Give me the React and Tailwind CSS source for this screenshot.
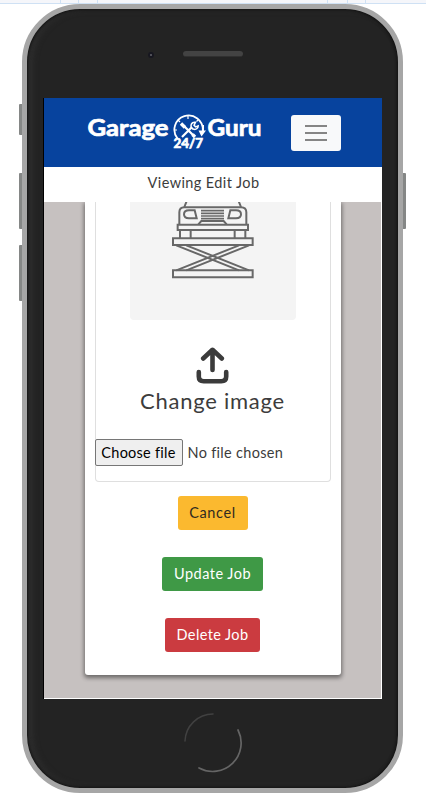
import React from "react";

function Logo() {
  return (
    <svg className="h-10 w-[178px]" viewBox="86 112 178 40" fill="none" stroke="#fff" role="img">
      <g fill="#fff" stroke="#fff" strokeWidth=".7" fontFamily="Lato, sans-serif" fontWeight="700">
        <text x="87.500" y="134.800" fontSize="22" textLength="81" lengthAdjust="spacingAndGlyphs">Garage</text>
        <text x="207.500" y="134.800" fontSize="22" textLength="54" lengthAdjust="spacingAndGlyphs">Guru</text>
        <text x="173.500" y="147.400" fontSize="13" textLength="29.500" lengthAdjust="spacingAndGlyphs">24/7</text>
      </g>
      <path d="M177.500 137.500a14.200 14.200 0 1 1 25.300-8" strokeWidth="1.800" />
      <path d="M203 124v7" strokeWidth="2" />
      <path d="M198.500 129.500h7.500l-4.500 6z" fill="#fff" stroke="none" />
      <path d="M174 129h3M188 115v3M178 119l2 2M198 119l-1.500 1.500" strokeWidth="1.200" />
      <path d="M182 136l10-10M184 125l9 9" strokeWidth="2.200" />
      <path d="M181 122.500l4 4M192.500 133.500l2.500 2.500" strokeWidth="3.400" />
      <path d="M195.500 121.300a3.600 3.600 0 1 0 2.700 3.600l-2.500 1-1.700-1.500z" strokeWidth="1.500" />
    </svg>
  );
}

function CarLift() {
  return (
    <svg className="block h-[118px] w-[166px]" viewBox="30 21 498 354" fill="none" stroke="#686868" strokeWidth="6">
      <path d="M201 16l-8 20M355 16l8 20" />
      <path d="M178 88V52q0-15 15-15H363q16 0 16 15V88" />
      <path d="M224 46H207q-15 0-15 12t15 12h23zM331 46h17q15 0 15 12t-15 12h-23z" />
      <path d="M243 47h69M243 55h69M243 63h69M243 71h69" strokeWidth="5" />
      <path d="M235 88l9-10h67l9 10" />
      <path d="M173 89h211v16H173zM180 106v23M212 106v23M344 106v23M376 106v23" />
      <path d="M159 130h239v20H159zM159 226h239v21H159z" />
      <path d="M169 151l188 75M199 151l188 75" />
      <path d="M387 151l-188 75M357 151l-188 75" />
    </svg>
  );
}

function UploadIcon() {
  return (
    <svg className="block h-[37px] w-[33px]" viewBox="0 0 33 37" fill="none" stroke="#3b3b3b" strokeWidth="4.600" strokeLinecap="round" strokeLinejoin="round">
      <path d="M16.500 23V3M7.200 11.500l9.300-8.700 9.300 8.700M2.800 25v4.500q0 4.700 4.900 4.700h17.600q4.900 0 4.900-4.700V25" />
    </svg>
  );
}

function Header() {
  return (
    <header className="flex h-[69px] shrink-0 items-center bg-[#07439e] pl-[42px]">
      <Logo />
      <button className="ml-[27px] flex h-[36px] w-[50px] flex-col items-center justify-center gap-[5px] rounded-[3px] bg-[#f8f9fa]">
        <span className="h-[2px] w-[22px] bg-[#858585]" />
        <span className="h-[2px] w-[22px] bg-[#858585]" />
        <span className="h-[2px] w-[22px] bg-[#858585]" />
      </button>
    </header>
  );
}

function JobCard() {
  return (
    <section className="mx-auto flex h-[473px] w-[256px] flex-col items-center rounded-b-[3px] bg-white shadow-[0_2px_4px_1px_rgba(0,0,0,0.45)]">
      <div className="flex h-[280px] w-[236px] shrink-0 flex-col items-center rounded-b-[4px] border border-t-0 border-[#dfdfdf]">
        <div className="h-[118px] w-[166px] overflow-hidden rounded-b-[4px] bg-[#f4f4f4]">
          <CarLift />
        </div>
        <div className="mt-[27px]"><UploadIcon /></div>
        <p className="mt-[3px] text-[22px] leading-[28px] tracking-[0.75px] whitespace-nowrap">Change image</p>
        <div className="mt-[24px] -ml-px flex w-[235px] items-center whitespace-nowrap">
          <button className="h-[27px] w-[88px] shrink-0 rounded-[2px] border border-[#767676] bg-[#efefef] tracking-[0.250px] text-black">Choose file</button>
          <span className="ml-[5px] tracking-[0.300px]">No file chosen</span>
        </div>
      </div>
      <button className="mt-[13.500px] h-[34.500px] w-[70px] shrink-0 rounded-[3px] bg-[#fbb92f] tracking-[0.600px] text-[#302a20]">Cancel</button>
      <button className="mt-[26.500px] h-[34.500px] w-[101px] shrink-0 rounded-[3px] bg-[#3f9946] tracking-[0.500px] text-white">Update Job</button>
      <button className="mt-[26.500px] h-[34.500px] w-[95px] shrink-0 rounded-[3px] bg-[#cb3b40] tracking-[0.400px] text-white">Delete Job</button>
    </section>
  );
}

export default function App() {
  return (
    <main className="relative h-[805px] w-[426px] overflow-hidden bg-white font-['Lato',sans-serif] text-[14.500px] text-[#3c3c3c]">
      <div className="flex h-1 border-b border-[#cfe1f4] bg-[#f5f6fa]">
        <span className="ml-[60px] w-[19px] border-x border-[#cfe1f4]" />
        <span className="w-[19px] border-r border-[#cfe1f4]" />
        <span className="ml-[229px] w-[21px] border-x border-[#cfe1f4]" />
        <span className="w-[18px] border-r border-[#cfe1f4]" />
      </div>
      <i className="absolute top-[104px] left-[19px] h-[31px] w-[4px] rounded-l-[1px] bg-[#858786]" />
      <i className="absolute top-[173px] left-[19px] h-[56px] w-[4px] rounded-l-[1px] bg-[#858786]" />
      <i className="absolute top-[245px] left-[19px] h-[56px] w-[4px] rounded-l-[1px] bg-[#858786]" />
      <i className="absolute top-[173px] left-[402px] h-[56px] w-[4px] rounded-r-[1px] bg-[#858786]" />
      <div className="relative ml-[21.500px] flex h-[789px] w-[381.500px] flex-col rounded-[58px] border-[5px] border-[#a6a6a6] bg-[#232323] shadow-[inset_0_0_3px_1px_#101010,inset_5px_0_6px_#303030]">
        <div className="flex h-[89px] shrink-0 items-start pt-[42px] pl-[121.500px]">
          <span className="mt-px h-[6px] w-[6px] rounded-full border-2 border-[#171720] bg-[#62626a]" />
          <span className="ml-[29px] h-[6px] w-[60px] rounded-full border-b border-[#303030] bg-[#434343]" />
        </div>
        <div className="ml-[17.500px] flex h-[601px] w-[338px] shrink-0 flex-col overflow-hidden bg-white shadow-[-1px_0_0_#000]">
          <Header />
          <h1 className="h-[35px] shrink-0 pr-[19px] text-center text-[14.500px] leading-[32px] tracking-[0.400px]">Viewing Edit Job</h1>
          <div className="mr-px h-[496px] overflow-hidden bg-[#c6c1c0]">
            <JobCard />
          </div>
        </div>
        <svg className="mt-[13px] ml-[155px] h-[62px] w-[62px] shrink-0" viewBox="0 0 62 62" fill="none" strokeLinecap="round">
          <path d="M3 29A28 28 0 0 1 31 2" stroke="#414141" strokeWidth="1.500" />
          <path d="M17 56A28.500 28.500 0 0 0 56 18" stroke="#656565" strokeWidth="1.700" />
        </svg>
      </div>
    </main>
  );
}
